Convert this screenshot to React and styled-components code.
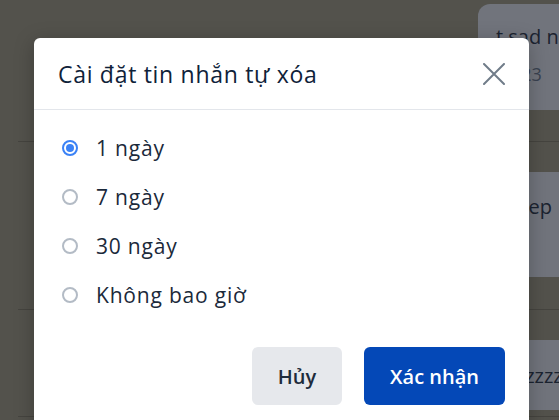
import React, { useState } from "react";
import styled, { createGlobalStyle } from "styled-components";

const Global = createGlobalStyle`
  html, body { margin: 0; padding: 0; }
  body {
    width: 559px;
    height: 420px;
    overflow: hidden;
    background: #53524c;
    font-family: "Open Sans", "Noto Sans", sans-serif;
  }
`;

const Page = styled.div`
  position: relative;
  width: 559px;
  height: 420px;
  overflow: hidden;
  background: #53524c;
`;

const ChatList = styled.div`
  display: flex;
  flex-direction: column;
  margin-left: 18px;
`;

const MessageRow = styled.div`
  display: flex;
  justify-content: flex-end;
  padding: ${(p) => p.$pad};
  border-bottom: 1px solid #45443f;
`;

const Bubble = styled.div`
  box-sizing: border-box;
  width: ${(p) => p.$w}px;
  height: ${(p) => p.$h}px;
  margin-right: -40px;
  background: #71747c;
  border-radius: 12px;
  padding: ${(p) => p.$padIn};
  color: #1b2330;
  font-size: 20px;
  white-space: nowrap;
  display: flex;
  flex-direction: column;
  justify-content: ${(p) => (p.$center ? "center" : "flex-start")};
  gap: 12px;
`;

const BubbleMeta = styled.span`
  font-size: 18px;
  color: #3a4250;
`;

const Modal = styled.div`
  position: absolute;
  left: 34px;
  top: 38px;
  width: 495px;
  background: #ffffff;
  border-radius: 6px;
  box-shadow: 0 4px 20px rgba(0, 0, 0, 0.25);
  display: flex;
  flex-direction: column;
`;

const Header = styled.div`
  box-sizing: border-box;
  height: 72px;
  padding: 0 24px;
  display: flex;
  align-items: center;
  justify-content: space-between;
  border-bottom: 1px solid #e3e6eb;
`;

const Title = styled.h2`
  margin: 0;
  font-size: 23px;
  letter-spacing: 0.7px;
  font-weight: 500;
  color: #0f2239;
`;

const CloseButton = styled.button`
  border: none;
  background: none;
  padding: 0;
  margin-right: -1px;
  width: 24px;
  height: 24px;
  display: flex;
  align-items: center;
  justify-content: center;
  cursor: pointer;
`;

const Body = styled.div`
  padding: 13px 24px 0;
  display: flex;
  flex-direction: column;
`;

const Option = styled.label`
  height: 49px;
  display: flex;
  align-items: center;
  gap: 18px;
  padding-left: 4px;
  font-size: 21px;
  letter-spacing: 0.8px;
  color: #1b293a;
  cursor: pointer;
`;

const RadioCircle = styled.span`
  box-sizing: border-box;
  flex: none;
  width: 16px;
  height: 16px;
  border-radius: 50%;
  border: ${(p) => (p.$checked ? "2px solid #3b82f6" : "2px solid #b3bbc5")};
  display: flex;
  align-items: center;
  justify-content: center;
  &::after {
    content: "";
    width: 8px;
    height: 8px;
    border-radius: 50%;
    background: #3b82f6;
    display: ${(p) => (p.$checked ? "block" : "none")};
  }
`;

const Footer = styled.div`
  padding: 28px 24px 24px;
  display: flex;
  justify-content: flex-end;
  gap: 22px;
`;

const Button = styled.button`
  height: 58px;
  padding: 0 26px;
  border: none;
  border-radius: 6px;
  font-family: inherit;
  font-size: 20px;
  font-weight: 600;
  background: ${(p) => (p.$primary ? "#0448b7" : "#e6e8ec")};
  color: ${(p) => (p.$primary ? "#ffffff" : "#1e2c3c")};
  cursor: pointer;
`;

const options = ["1 ngày", "7 ngày", "30 ngày", "Không bao giờ"];

export default function App() {
  const [sel, setSel] = useState(0);
  return (
    <Page>
      <Global />
      <ChatList>
        <MessageRow $pad="4px 0 31px">
          <Bubble $w={121} $h={106} $padIn="19px 18px">
            <span>t sad nè</span>
            <BubbleMeta>10:23</BubbleMeta>
          </Bubble>
        </MessageRow>
        <MessageRow $pad="30px 0 32px">
          <Bubble $w={112} $h={105} $padIn="21px 18px">
            <span>Keep</span>
          </Bubble>
        </MessageRow>
        <MessageRow $pad="30px 0 6px">
          <Bubble $w={120} $h={70} $padIn="0 18px" $center>
            <span>zzzzzzzz</span>
          </Bubble>
        </MessageRow>
      </ChatList>

      <Modal>
        <Header>
          <Title>Cài đặt tin nhắn tự xóa</Title>
          <CloseButton aria-label="Đóng">
            <svg width="22" height="22" viewBox="0 0 22 22">
              <path d="M1 1 L21 21 M21 1 L1 21" stroke="#707c89" strokeWidth="2" strokeLinecap="round" />
            </svg>
          </CloseButton>
        </Header>
        <Body>
          {options.map((o, i) => (
            <Option key={o} onClick={() => setSel(i)}>
              <RadioCircle $checked={sel === i} />
              {o}
            </Option>
          ))}
        </Body>
        <Footer>
          <Button>Hủy</Button>
          <Button $primary>Xác nhận</Button>
        </Footer>
      </Modal>
    </Page>
  );
}
